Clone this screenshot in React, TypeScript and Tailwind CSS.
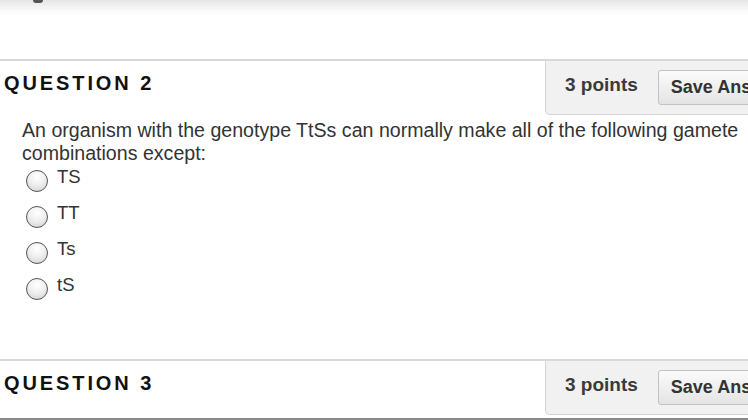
const options = ["TS", "TT", "Ts", "tS"];

function Radio() {
  return (
    <span className="h-[22px] w-[22px] shrink-0 rounded-full border-[1.5px] border-[#555] bg-[radial-gradient(circle_at_50%_30%,#ffffff_0%,#f0f0f0_45%,#cfcfcf_100%)]" />
  );
}

function Header({ n }: { n: number }) {
  return (
    <div className="flex h-[56px] items-stretch justify-between border-t-2 border-[#d9d9d9]">
      <h2 className="pl-[4px] pt-[10px] text-[20px] font-bold leading-[24px] tracking-[2.9px] text-[#111]">
        QUESTION {n}
      </h2>
      <div className="flex w-[203px] items-center gap-[20px] overflow-hidden rounded-bl-[5px] border-b border-l border-[#d4d4d4] bg-[#f1f1f1] pl-[19px]">
        <span className="-mt-[4px] whitespace-nowrap text-[19px] font-bold text-[#3a3a3a]">3 points</span>
        <button className="-mt-[1px] h-[35px] shrink-0 whitespace-nowrap rounded-[3px] border border-[#c2c2c2] bg-gradient-to-b from-[#fbfbfb] to-[#e4e4e4] px-[12px] text-[18px] font-bold text-[#333]">
          Save Answer
        </button>
      </div>
    </div>
  );
}

export default function App() {
  return (
    <div className="relative h-[420px] w-[748px] overflow-hidden bg-white font-['Liberation_Sans',Arial,sans-serif]">
      <div className="h-[59px] bg-gradient-to-b from-[#e6e6e6] via-[#fafafa] via-[18%] to-white to-[30%]">
        <div className="ml-[33px] h-[3px] w-[10px] rounded-b-full bg-[#555]" />
      </div>

      <Header n={2} />

      <div className="h-[244px] pl-[22px] pt-[4px] text-[#333]">
        <p className="text-[19.6px] leading-[23px]">
          An organism with the genotype TtSs can normally make all of the following gamete combinations except:
        </p>
        <div className="-mt-[2px] flex flex-col">
          {options.map((o) => (
            <label key={o} className="flex h-[36px] items-center gap-[9px] pl-[4px]">
              <Radio />
              <span className="-mt-[8px] text-[18.5px] leading-[22px]">{o}</span>
            </label>
          ))}
        </div>
      </div>

      <Header n={3} />
      <div className="border-b-2 border-[#8a8a8a] pt-[3px]" />
    </div>
  );
}
